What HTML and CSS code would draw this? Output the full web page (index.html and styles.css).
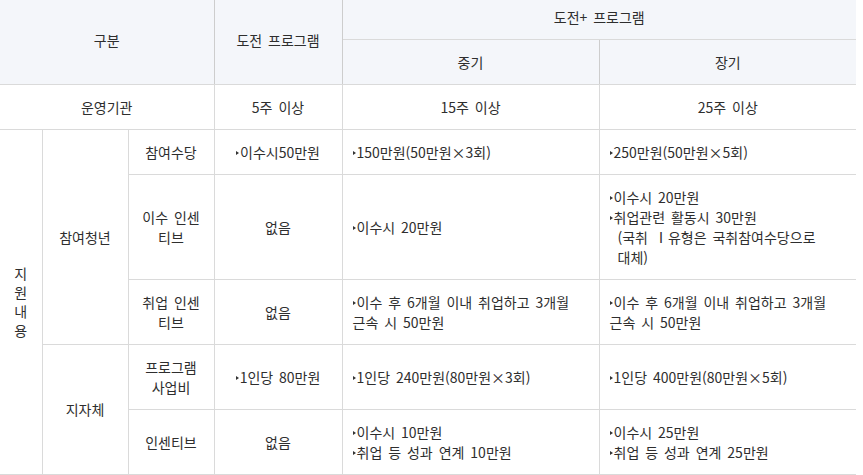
FILE: index.html
```html
<!DOCTYPE html>
<html lang="ko">
<head>
<meta charset="utf-8">
<link rel="stylesheet" href="styles.css">
</head>
<body>
<table class="tbl">
  <colgroup>
    <col class="c1"><col class="c2"><col class="c3"><col class="c4"><col class="c5"><col class="c6">
  </colgroup>
  <thead>
    <tr class="h1">
      <th colspan="3" rowspan="2">구분</th>
      <th rowspan="2">도전 프로그램</th>
      <th colspan="2">도전+ 프로그램</th>
    </tr>
    <tr class="h2">
      <th>중기</th>
      <th>장기</th>
    </tr>
  </thead>
  <tbody>
    <tr class="r45">
      <td colspan="3" class="ctr">운영기관</td>
      <td class="ctr">5주 이상</td>
      <td class="ctr">15주 이상</td>
      <td class="ctr">25주 이상</td>
    </tr>
    <tr class="r45">
      <td rowspan="5" class="vert">지<br>원<br>내<br>용</td>
      <td rowspan="3" class="ctr">참여청년</td>
      <td class="ctr">참여수당</td>
      <td class="ctr"><span class="b">이수시50만원</span></td>
      <td class="lft"><span class="b">150만원(50만원×3회)</span></td>
      <td class="lft"><span class="b">250만원(50만원×5회)</span></td>
    </tr>
    <tr class="r105">
      <td class="ctr">이수 인센<br>티브</td>
      <td class="ctr">없음</td>
      <td class="lft"><span class="b">이수시 20만원</span></td>
      <td class="lft">
        <span class="b">이수시 20만원</span><br>
        <span class="b">취업관련 활동시 30만원</span>
        <div class="ind">(국취 Ⅰ유형은 국취참여수당으로<br>대체)</div>
      </td>
    </tr>
    <tr class="r65">
      <td class="ctr">취업 인센<br>티브</td>
      <td class="ctr">없음</td>
      <td class="lft"><span class="b">이수 후 6개월 이내 취업하고 3개월</span><br>근속 시 50만원</td>
      <td class="lft"><span class="b">이수 후 6개월 이내 취업하고 3개월</span><br>근속 시 50만원</td>
    </tr>
    <tr class="r65">
      <td rowspan="2" class="ctr">지자체</td>
      <td class="ctr">프로그램<br>사업비</td>
      <td class="ctr"><span class="b">1인당 80만원</span></td>
      <td class="lft"><span class="b">1인당 240만원(80만원×3회)</span></td>
      <td class="lft"><span class="b">1인당 400만원(80만원×5회)</span></td>
    </tr>
    <tr class="r65">
      <td class="ctr">인센티브</td>
      <td class="ctr">없음</td>
      <td class="lft"><span class="b">이수시 10만원</span><br><span class="b">취업 등 성과 연계 10만원</span></td>
      <td class="lft"><span class="b">이수시 25만원</span><br><span class="b">취업 등 성과 연계 25만원</span></td>
    </tr>
  </tbody>
</table>
</body>
</html>
```
FILE: styles.css
```css
html, body {
  margin: 0;
  padding: 0;
  background: #fff;
}
body {
  font-family: "Noto Sans CJK KR", "Noto Sans", sans-serif;
  font-size: 14px;
  line-height: 20px;
  color: #2e2e2e;
  word-spacing: 2px;
}
.tbl {
  border-collapse: collapse;
  table-layout: fixed;
  width: 856px;
}
.c1 { width: 42px; }
.c2 { width: 86px; }
.c3 { width: 86px; }
.c4 { width: 128px; }
.c5 { width: 257px; }
.c6 { width: 257px; }

.tbl th,
.tbl td {
  border: 1px solid #dadada;
  padding: 0 10px;
  vertical-align: middle;
}
.tbl tr > :first-child { border-left: none; }
.tbl tr > :last-child { border-right: none; }
.tbl thead tr:first-child th { border-top: none; }

.tbl th {
  background: #f4f6fa;
  font-weight: normal;
  text-align: center;
  border-left-color: #cdcdcd;
  border-right-color: #cdcdcd;
}
.h1 { height: 39px; }
.h2 { height: 45px; }
.h1 th { padding-bottom: 4px; }

.r45 { height: 45px; }
.r65 { height: 65px; }
.r105 { height: 105px; }

.ctr { text-align: center; }
.lft { text-align: left; }

.tbl td.vert {
  padding: 0;
  text-align: center;
  line-height: 19px;
}

.b::before {
  content: "";
  display: inline-block;
  border-left: 3px solid #333;
  border-top: 2.5px solid transparent;
  border-bottom: 2.5px solid transparent;
  margin-right: 1px;
  vertical-align: middle;
  position: relative;
  top: -1px;
}
.ind {
  padding-left: 8px;
}
```
